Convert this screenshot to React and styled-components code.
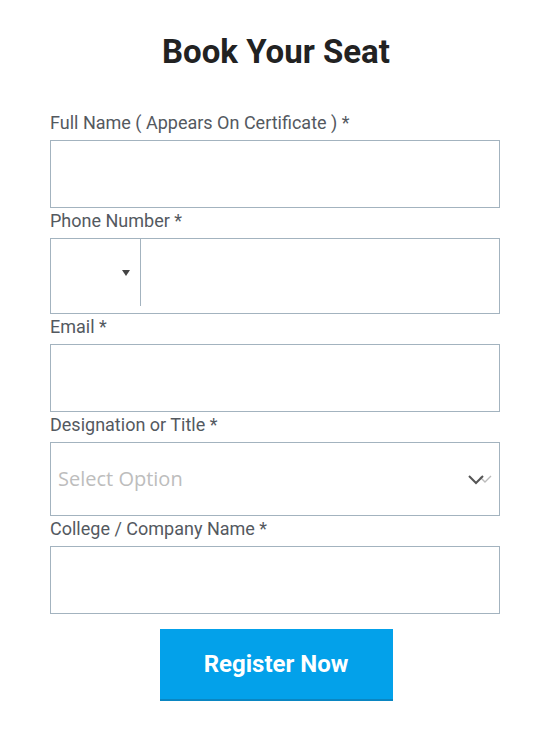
import React from "react";
import styled, { createGlobalStyle } from "styled-components";

const GlobalStyle = createGlobalStyle`
  body {
    margin: 0;
    background: #fff;
    font-family: Roboto, "Liberation Sans", sans-serif;
  }
`;

const Page = styled.div`
  width: 452px;
  margin-left: 50px;
  padding-top: 32px;
`;

const Title = styled.h2`
  margin: 0 0 38px;
  font-family: Roboto, sans-serif;
  font-weight: 700;
  font-size: 33px;
  line-height: 1.2;
  color: #222;
  text-align: center;
`;

const Form = styled.form`
  display: flex;
  flex-direction: column;
`;

const Field = styled.div`
  display: flex;
  flex-direction: column;
  width: 450px;
`;

const Label = styled.label`
  font-size: 18px;
  line-height: 26px;
  margin-bottom: 4px;
  color: #54595f;
`;

const Box = styled.div`
  box-sizing: border-box;
  height: ${(p) => p.h || 68}px;
  border: 1px solid #a3b3bf;
  background: #fff;
  display: flex;
  align-items: ${(p) => (p.center ? "center" : "stretch")};
`;

const Input = styled.input`
  flex: 1;
  border: none;
  outline: none;
  background: transparent;
  font-family: "Open Sans", sans-serif;
  font-size: 16px;
  padding: 0 8px;
`;

const Country = styled.div`
  width: 90px;
  height: 67px;
  border-right: 1px solid #a3b3bf;
  display: flex;
  align-items: center;
  justify-content: flex-end;
  padding-right: 10px;
  box-sizing: border-box;
`;

const Caret = styled.span`
  width: 0;
  height: 0;
  border-left: 4px solid transparent;
  border-right: 4px solid transparent;
  border-top: 6px solid #444;
  margin-top: 2px;
`;

const Placeholder = styled.span`
  flex: 1;
  padding-left: 7px;
  font-family: "Open Sans", sans-serif;
  font-size: 20px;
  color: #bdbdbd;
`;

const Chevron = styled.svg`
  width: 28px;
  height: 14px;
  margin-right: 6px;
`;

const Actions = styled.div`
  display: flex;
  justify-content: center;
  margin-top: 15px;
`;

const Button = styled.button`
  width: 233px;
  height: 72px;
  border: none;
  border-bottom: 2px solid #0a86c2;
  background: #03a1ea;
  color: #fff;
  font-family: Roboto, sans-serif;
  font-weight: 700;
  font-size: 24px;
  cursor: pointer;
`;

const App = () => {
  return (
    <Page>
      <GlobalStyle />
      <Title>Book Your Seat</Title>
      <Form onSubmit={(e) => e.preventDefault()}>
        <Field>
          <Label>Full Name ( Appears On Certificate ) *</Label>
          <Box>
            <Input type="text" />
          </Box>
        </Field>
        <Field>
          <Label>Phone Number *</Label>
          <Box h={76}>
            <Country>
              <Caret />
            </Country>
            <Input type="tel" />
          </Box>
        </Field>
        <Field>
          <Label>Email *</Label>
          <Box>
            <Input type="email" />
          </Box>
        </Field>
        <Field>
          <Label>Designation or Title *</Label>
          <Box h={74} center>
            <Placeholder>Select Option</Placeholder>
            <Chevron viewBox="0 0 28 14">
              <polyline points="15,5 20,10 26,4" fill="none" stroke="#bbb" strokeWidth="1.4" />
              <polyline points="4,4 11,11 18,4" fill="none" stroke="#555" strokeWidth="2" />
            </Chevron>
          </Box>
        </Field>
        <Field>
          <Label>College / Company Name *</Label>
          <Box>
            <Input type="text" />
          </Box>
        </Field>
        <Actions>
          <Button type="submit">Register Now</Button>
        </Actions>
      </Form>
    </Page>
  );
};

export default App;
